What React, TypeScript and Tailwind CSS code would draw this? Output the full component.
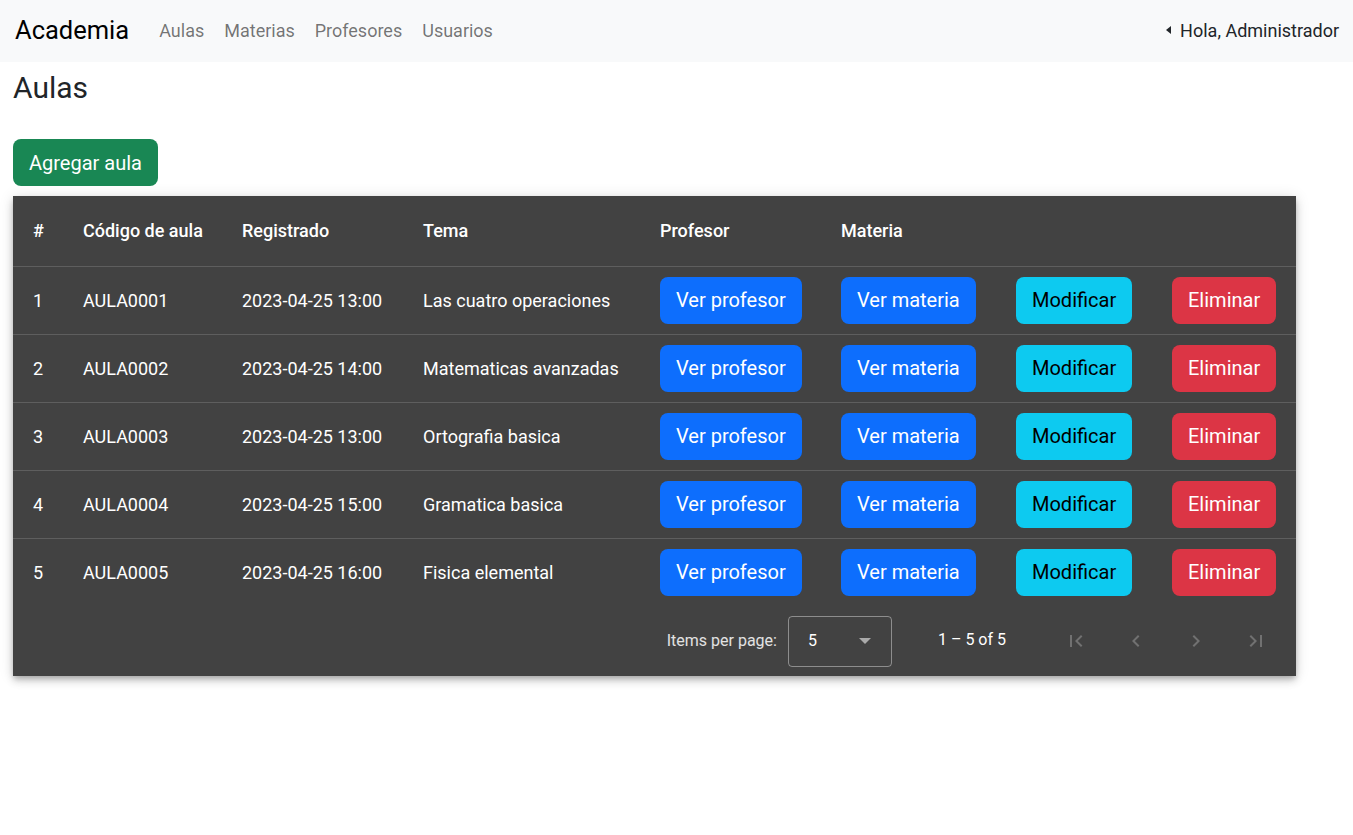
import React from 'react';

const aulas = [
  { id: 1, codigo: 'AULA0001', registrado: '2023-04-25 13:00', tema: 'Las cuatro operaciones' },
  { id: 2, codigo: 'AULA0002', registrado: '2023-04-25 14:00', tema: 'Matematicas avanzadas' },
  { id: 3, codigo: 'AULA0003', registrado: '2023-04-25 13:00', tema: 'Ortografia basica' },
  { id: 4, codigo: 'AULA0004', registrado: '2023-04-25 15:00', tema: 'Gramatica basica' },
  { id: 5, codigo: 'AULA0005', registrado: '2023-04-25 16:00', tema: 'Fisica elemental' },
];

const btn = 'h-[47px] px-4 rounded-[8px] text-[20px] leading-[30px] whitespace-nowrap';

const PagerIcon = ({ d }: { d: string }) => (
  <div className="w-[60px] flex justify-center">
    <svg viewBox="0 0 24 24" className="w-6 h-6 fill-white/25">
      <path d={d} />
    </svg>
  </div>
);

export default function App() {
  return (
    <div className="min-h-[835px] bg-white text-[#212529] font-['Roboto',sans-serif]">
      <nav className="h-[62px] bg-[#f8f9fa] flex items-center pl-[15px] pr-[14px] pb-[2px]">
        <span className="text-[25.5px] text-black mr-[30px]">Academia</span>
        <div className="flex gap-5 text-[18px] text-black/55">
          <span>Aulas</span>
          <span>Materias</span>
          <span>Profesores</span>
          <span>Usuarios</span>
        </div>
        <div className="ml-auto flex items-center text-[18px] text-[#212529]">
          <span className="w-0 h-0 border-y-[4px] border-y-transparent border-r-[5px] border-r-[#212529] mr-[9px]" />
          Hola, Administrador
        </div>
      </nav>

      <main className="px-[13px]">
        <h3 className="text-[30px] leading-[1.2] font-normal mt-[8px] mb-[33px]">Aulas</h3>
        <button className="h-[47px] px-4 rounded-[8px] bg-[#198754] text-white text-[20px]">Agregar aula</button>

        <div className="mt-[10px] w-[1283px] bg-[#424242] text-white shadow-[0_3px_5px_-1px_rgba(0,0,0,0.2),0_5px_8px_0_rgba(0,0,0,0.14),0_1px_14px_0_rgba(0,0,0,0.12)]">
          <table className="w-full table-fixed border-collapse text-[18px]">
            <colgroup>
              <col className="w-[50px]" />
              <col className="w-[159px]" />
              <col className="w-[181px]" />
              <col className="w-[237px]" />
              <col className="w-[181px]" />
              <col className="w-[175px]" />
              <col className="w-[156px]" />
              <col className="w-[144px]" />
            </colgroup>
            <thead>
              <tr className="h-[70px] border-b border-white/15 text-left">
                <th className="pl-5 font-medium">#</th>
                <th className="pl-5 font-medium">Código de aula</th>
                <th className="pl-5 font-medium">Registrado</th>
                <th className="pl-5 font-medium">Tema</th>
                <th className="pl-5 font-medium">Profesor</th>
                <th className="pl-5 font-medium">Materia</th>
                <th />
                <th />
              </tr>
            </thead>
            <tbody>
              {aulas.map((a, i) => (
                <tr key={a.id} className={`h-[68px] ${i < aulas.length - 1 ? 'border-b border-white/15' : ''}`}>
                  <td className="pl-5">{a.id}</td>
                  <td className="pl-5">{a.codigo}</td>
                  <td className="pl-5">{a.registrado}</td>
                  <td className="pl-5">{a.tema}</td>
                  <td className="pl-5">
                    <button className={`${btn} bg-[#0d6efd] text-white`}>Ver profesor</button>
                  </td>
                  <td className="pl-5">
                    <button className={`${btn} bg-[#0d6efd] text-white`}>Ver materia</button>
                  </td>
                  <td className="pl-5">
                    <button className={`${btn} bg-[#0dcaf0] text-black`}>Modificar</button>
                  </td>
                  <td className="pl-5">
                    <button className={`${btn} bg-[#dc3545] text-white`}>Eliminar</button>
                  </td>
                </tr>
              ))}
            </tbody>
          </table>

          <div className="h-[70px] flex items-center justify-end pr-[10px] text-[16px] text-white/85">
            <span className="mr-[11px]">Items per page:</span>
            <div className="w-[104px] h-[51px] border border-white/40 rounded-[4px] flex items-center pl-[19px] pr-[20px] text-white">
              <span>5</span>
              <span className="ml-auto w-0 h-0 border-x-[6px] border-x-transparent border-t-[6px] border-t-white/55" />
            </div>
            <span className="ml-[46px] mr-[40px] -mt-[3px] text-white">1 – 5 of 5</span>
            <div className="flex">
              <PagerIcon d="M18.41 16.59L13.82 12l4.59-4.59L17 6l-6 6 6 6zM6 6h2v12H6z" />
              <PagerIcon d="M15.41 7.41L14 6l-6 6 6 6 1.41-1.41L10.83 12z" />
              <PagerIcon d="M10 6L8.59 7.41 13.17 12l-4.58 4.59L10 18l6-6z" />
              <PagerIcon d="M5.59 7.41L10.18 12l-4.59 4.59L7 18l6-6-6-6zM16 6h2v12h-2z" />
            </div>
          </div>
        </div>
      </main>
    </div>
  );
}
